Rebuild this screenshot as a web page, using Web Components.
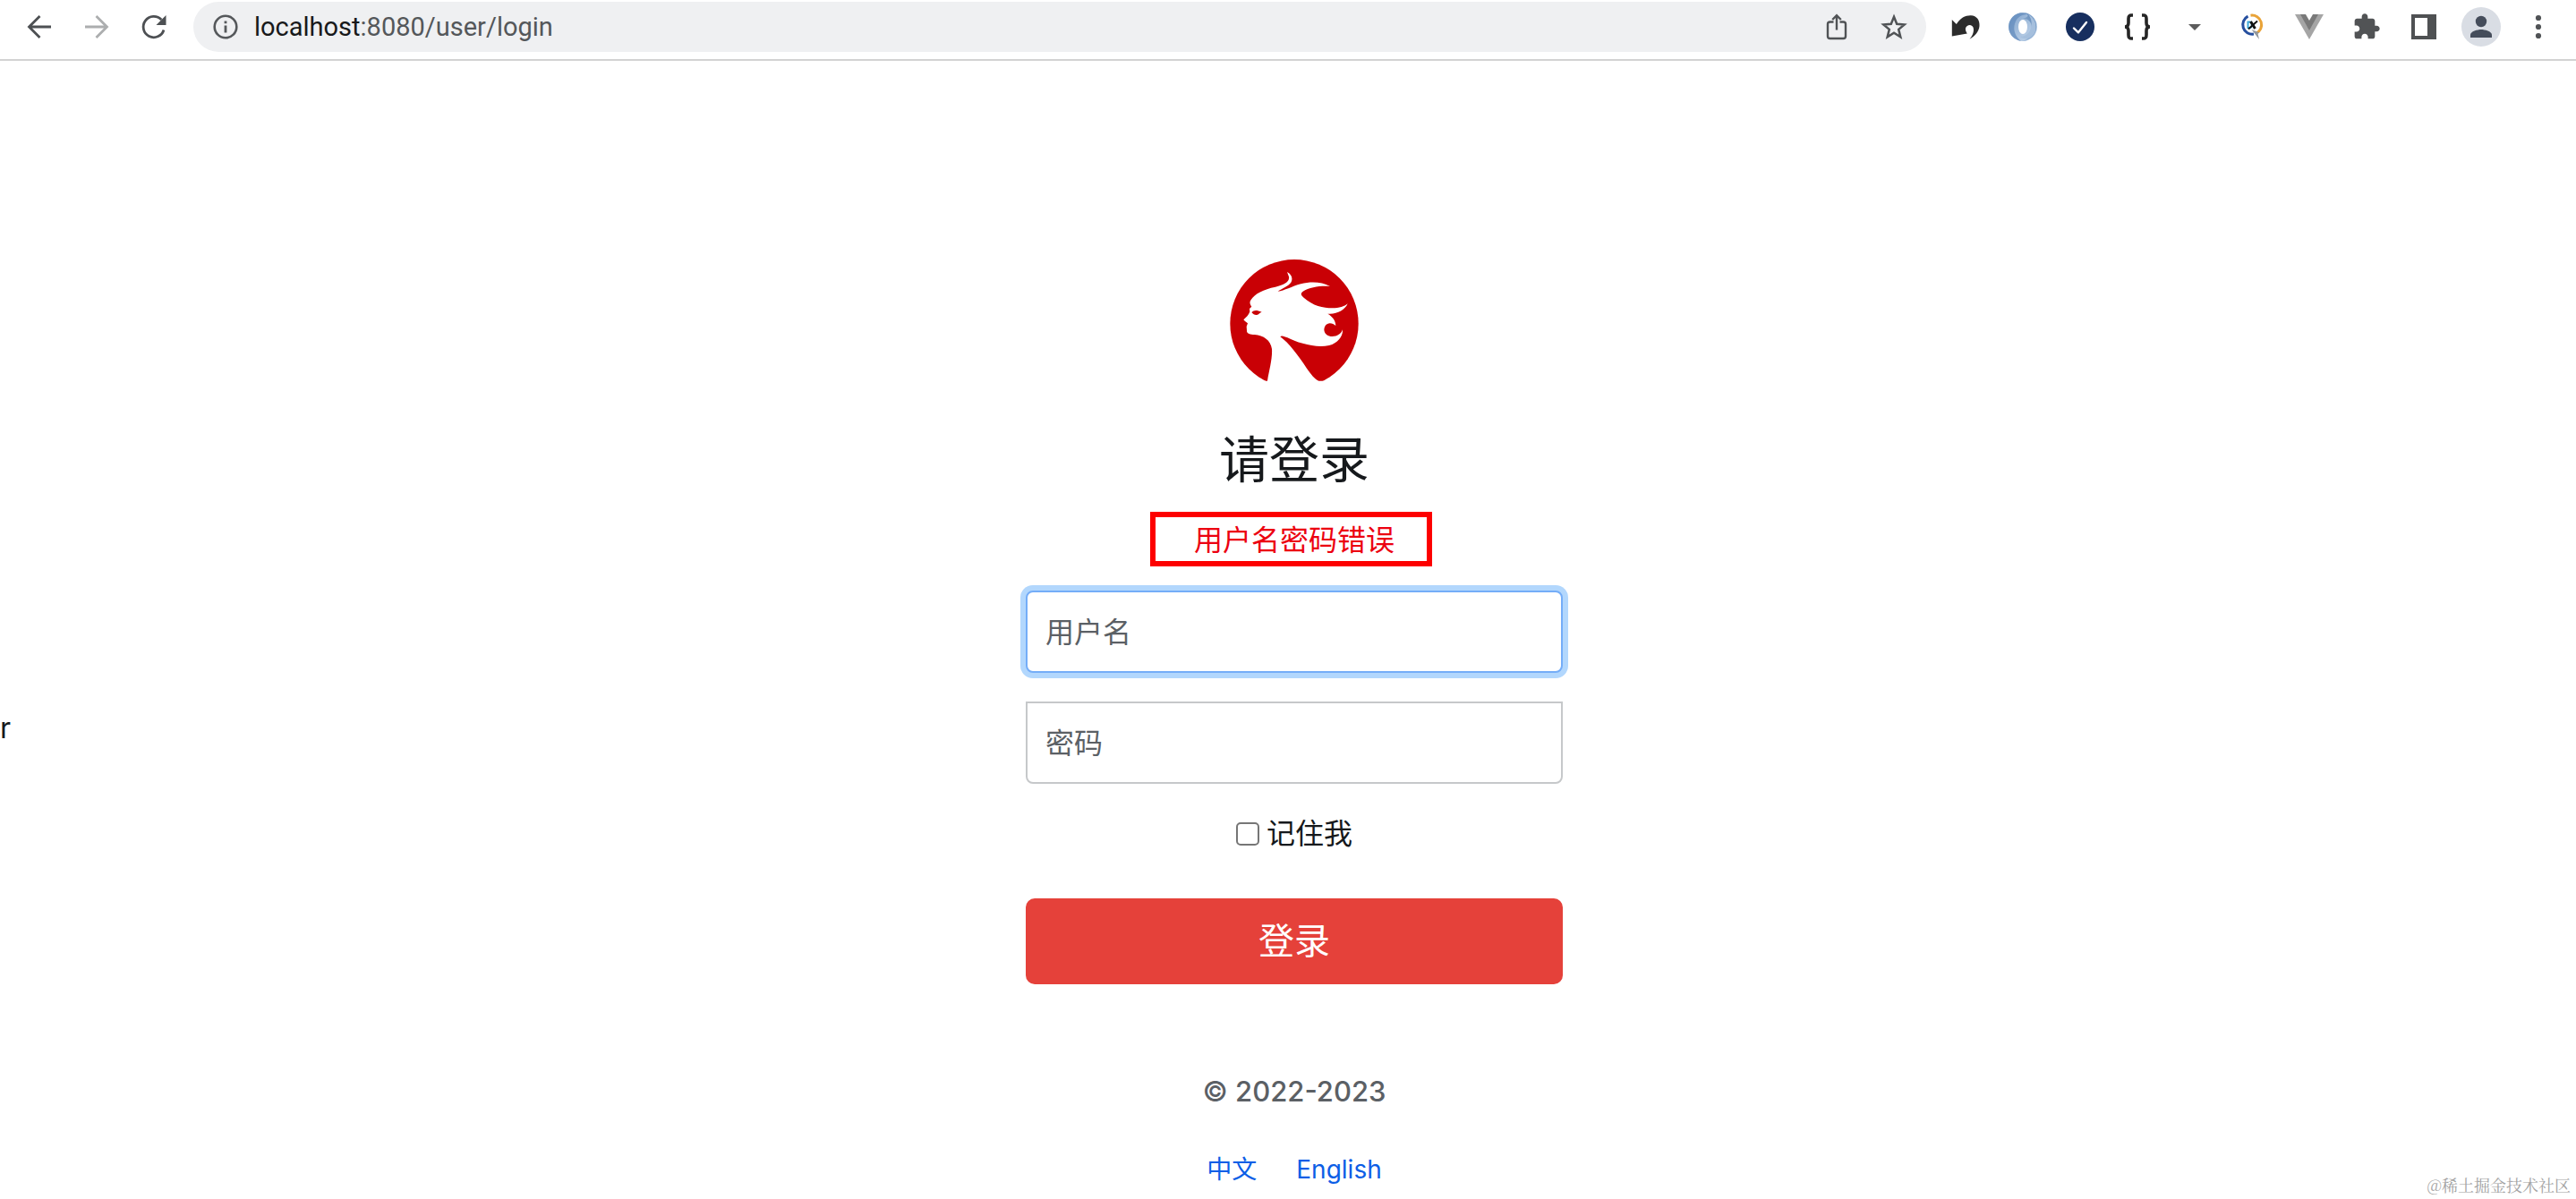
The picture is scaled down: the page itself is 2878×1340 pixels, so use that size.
<!DOCTYPE html>
<html lang="zh">
<head>
<meta charset="utf-8">
<title>Login</title>
<style>
  body { margin: 0; background: #fff; color: #16191c; font-family: Inter, "Noto Sans CJK SC", sans-serif; font-size: 32px; line-height: 48px; }
</style>
</head>
<body>
<login-app></login-app>
<script>
const define = (name, html) => {
  const t = document.createElement('template');
  t.innerHTML = html;
  customElements.define(name, class extends HTMLElement {
    constructor() {
      super();
      this.attachShadow({ mode: 'open' }).append(t.content.cloneNode(true));
    }
  });
};

customElements.define('tool-button', class extends HTMLElement {
  connectedCallback() {
    if (this.shadowRoot) return;
    this.attachShadow({ mode: 'open' }).innerHTML = `
      <style>
        :host { display: block; flex: none; }
        button { display: grid; place-items: center; width: 64px; height: 56px; padding: 0; border: 0; background: none; }
      </style>
      <button type="button" aria-label="${this.getAttribute('label')}"><slot></slot></button>`;
  }
});

customElements.define('text-field', class extends HTMLElement {
  connectedCallback() {
    if (this.shadowRoot) return;
    this.attachShadow({ mode: 'open' }).innerHTML = `
      <style>
        :host { display: block; }
        input { display: block; box-sizing: border-box; width: 100%; height: 92px; padding: 0 20px; border: 2px solid #c6c8ca; border-radius: 0 0 8px 8px; background: #fff; font: inherit; color: inherit; outline: none; }
        input::placeholder { color: #5b6065; opacity: 1; }
        :host([active]) input { border-color: #74adf8; border-radius: 8px; box-shadow: 0 0 0 6px #b2d7fd; }
      </style>
      <input type="${this.getAttribute('type')}" placeholder="${this.getAttribute('label')}" aria-label="${this.getAttribute('label')}">`;
  }
});

define('address-bar', `
  <style>
    :host { display: flex; flex: 1; align-items: center; height: 56px; padding: 0 4px; border-radius: 28px; background: #eff0f2; font-family: Roboto, sans-serif; font-size: 29px; line-height: 36px; }
    .site { display: grid; place-items: center; width: 64px; }
    .url { flex: 1; color: #54575a; }
    b { font-weight: 400; color: #18191b; }
    svg { display: block; }
  </style>
  <span class="site"><svg width="28" height="28" viewBox="0 0 28 28"><circle cx="14" cy="14" r="12.3" fill="none" stroke="#55585b" stroke-width="2.6"/><path d="M12.6 12.5h2.8v8h-2.8zM12.6 7.5h2.8v2.8h-2.8z" fill="#55585b"/></svg></span>
  <span class="url"><b>localhost</b>:8080/user/login</span>
  <tool-button label="Share"><svg width="28" height="32" viewBox="0 0 28 32" fill="none" stroke="#505356" stroke-width="2.4"><path d="M10.500 10.500H6.500a2.500 2.500 0 0 0-2.500 2.500v13.500a2.500 2.500 0 0 0 2.500 2.500h15a2.500 2.500 0 0 0 2.500-2.500V13a2.500 2.500 0 0 0-2.500-2.500h-4M14 19.500V4M9.200 8L14 3.200 18.800 8"/></svg></tool-button>
  <tool-button label="Bookmark"><svg width="32" height="32" viewBox="0 0 32 32" fill="none" stroke="#505356" stroke-width="2.500"><path d="M16 4.800l3.200 7.900 8.500.7-6.500 5.500 2.100 8.300-7.300-4.500-7.300 4.500 2.100-8.300-6.500-5.500 8.500-.7z"/></svg></tool-button>
`);

define('browser-bar', `
  <style>
    :host { display: flex; align-items: center; gap: 12px; padding: 2px 10px 8px 12px; border-bottom: 2px solid #d2d2d2; background: #fff; }
    nav { display: flex; }
    svg { display: block; }
  </style>
  <nav>
    <tool-button label="Back"><svg width="32" height="32" viewBox="0 0 32 32" fill="none" stroke="#4d5053" stroke-width="2.800"><path d="M29 16H5M16.500 4L4.500 16l12 12"/></svg></tool-button>
    <tool-button label="Forward"><svg width="32" height="32" viewBox="0 0 32 32" fill="none" stroke="#acaeaf" stroke-width="2.800"><path d="M3 16h24M15.500 4l12 12-12 12"/></svg></tool-button>
    <tool-button label="Reload"><svg width="32" height="32" viewBox="0 0 32 32"><path d="M27 19.500A11.700 11.700 0 1 1 24.300 8" fill="none" stroke="#4d5053" stroke-width="2.800"/><path d="M29.500 3v11h-11z" fill="#4d5053"/></svg></tool-button>
  </nav>
  <address-bar></address-bar>
  <nav>
    <tool-button label="Undo"><svg width="32" height="32" viewBox="0 0 32 32"><path d="M.8 8l5 5C10 6 16 3 22 3.200c6.500.4 10 5.300 9.500 11.800-.5 6-4.500 11-11 14.800 4-4.800 5.300-9.800 4-13.300-1.300-2.800-4.500-3.300-7-1.200-2 1.700-2.200 4.200.3 8.200L.8 26.500z" fill="#2c2c2c"/></svg></tool-button>
    <tool-button label="Swirl"><svg width="32" height="32" viewBox="0 0 32 32"><defs><linearGradient id="a" x1="0" y1="0" x2="1" y2="1"><stop offset="0" stop-color="#7fa3cc"/><stop offset="1" stop-color="#c9daee"/></linearGradient><linearGradient id="b" x1="1" y1="0" x2="0" y2="1"><stop offset="0" stop-color="#5580b2"/><stop offset="1" stop-color="#a9c3e0"/></linearGradient></defs><circle cx="16" cy="16" r="16" fill="url(#a)"/><path d="M18 .2A16 16 0 0 1 14 31.900c7-1 12-6 12-14C26 10 22 7 16 7c6-2 8-4 2-6.800z" fill="url(#b)"/><path d="M3 7A16 16 0 0 0 14 31.900C6 26 4 16 9 8 12 4 16 2 22 2 14-1 7 1 3 7z" fill="#5f89ba" opacity=".7"/><path d="M22 2c4 5 5 12 2 18-2 4-6 7-11 7 6 5 15 1 17-6 2-8-1-15-8-19z" fill="#a5bfdd"/><ellipse cx="16" cy="16" rx="5" ry="8" fill="#fff"/></svg></tool-button>
    <tool-button label="Check"><svg width="32" height="32" viewBox="0 0 32 32"><circle cx="16" cy="16" r="16" fill="#172f5f"/><path d="M9 17.500l5 4.800L23 11" fill="none" stroke="#fff" stroke-width="2.400" stroke-linecap="round" stroke-linejoin="round"/></svg></tool-button>
    <tool-button label="JSON"><svg width="32" height="32" viewBox="0 0 32 32" fill="none" stroke="#252525" stroke-width="3.600"><path d="M11 3H9.500C6.500 3 6 4.500 6 7v4.500C6 14 5 16 2 16c3 0 4 2 4 4.500V25c0 2.500.5 4 3.500 4H11M21 3h1.500C25.500 3 26 4.500 26 7v4.500c0 2.500 1 4.500 4 4.500-3 0-4 2-4 4.500V25c0 2.500-.5 4-3.500 4H21"/></svg></tool-button>
    <tool-button label="More tools"><svg width="32" height="32" viewBox="0 0 32 32"><path d="M9 13h14l-7 7z" fill="#5c5c5c"/></svg></tool-button>
    <tool-button label="DX"><svg width="32" height="32" viewBox="0 0 32 32" fill="none"><path d="M14.500 3.200A10.600 10.600 0 0 1 20.500 23.300" stroke="#e9a338" stroke-width="3"/><path d="M11.500 4.200A10.600 10.600 0 0 0 18 24.100" stroke="#264f9f" stroke-width="3"/><path d="M11.500 10.500h2c3 0 3 6.500 0 6.500h-2z" stroke="#3ba7da" stroke-width="2"/><path d="M14.500 10l5 8" stroke="#111" stroke-width="3"/><path d="M22 9.500L12 18.500" stroke="#111" stroke-width="2"/><path d="M15.500 19l8.500 11-1.500-6.500 2-1z" fill="#92989e"/></svg></tool-button>
    <tool-button label="Vue"><svg width="32" height="32" viewBox="0 0 32 32"><path d="M0 2h32L16 30z" fill="#a5a5a5"/><path d="M6 2h20L16 20z" fill="#797979"/><path d="M12 2h8l-4 7z" fill="#fff"/></svg></tool-button>
    <tool-button label="Extensions"><svg width="32" height="32" viewBox="0 0 24 24"><path d="M20.500 11H19V7c0-1.100-.9-2-2-2h-4V3.500C13 2.120 11.880 1 10.500 1S8 2.120 8 3.500V5H4c-1.100 0-1.990.9-1.990 2v3.800H3.500c1.490 0 2.700 1.210 2.700 2.700s-1.210 2.700-2.700 2.700H2V20c0 1.100.9 2 2 2h3.800v-1.500c0-1.490 1.210-2.700 2.700-2.700 1.490 0 2.700 1.210 2.700 2.700V22H17c1.100 0 2-.9 2-2v-4h1.500c1.380 0 2.500-1.120 2.500-2.500S21.880 11 20.500 11z" fill="#515355"/></svg></tool-button>
    <tool-button label="Side panel"><svg width="32" height="32" viewBox="0 0 32 32"><path d="M2 2h28v28H2zM6 6v20h14V6z" fill="#4f5153" fill-rule="evenodd"/></svg></tool-button>
    <tool-button label="Profile"><svg width="44" height="44" viewBox="0 0 44 44"><circle cx="22" cy="22" r="22" fill="#d9dde4"/><circle cx="22" cy="16" r="6.200" fill="#454d5b"/><path d="M10 34v-3c0-4 8-6 12-6s12 2 12 6v3z" fill="#454d5b"/></svg></tool-button>
    <tool-button label="Menu"><svg width="32" height="32" viewBox="0 0 32 32" fill="#505356"><circle cx="16" cy="6" r="3.100"/><circle cx="16" cy="16" r="3.100"/><circle cx="16" cy="26" r="3.100"/></svg></tool-button>
  </nav>
`);

define('brand-logo', `
  <style>:host { display: block; } svg { display: block; }</style>
  <svg width="144" height="144" viewBox="42 24 432 432" role="img" aria-label="Logo">
    <circle cx="258" cy="245" r="215" fill="#c90005"/>
    <path fill="#fff" d="M168 437C174 400 185 365 183 330 179 300 155 285 125 282 110 282 98 279 99 268L98 255 102 244 93 237 88 232C96 225 106 215 109 205L108 195 115 188C108 180 108 170 113 165 125 145 155 130 195 122 225 115 243 105 240 88L234 72C250 80 254 95 247 107 240 118 215 128 203 137 225 135 250 120 280 112 315 103 350 105 378 120 350 117 310 122 287 137 278 143 280 151 290 158 320 185 355 193 385 193 410 193 425 188 437 178 428 200 400 215 370 212 385 220 397 235 397 252 388 244 372 238 362 252 352 268 362 285 380 288 400 290 415 280 420 265 422 285 405 310 375 318 330 328 270 310 235 292 225 288 215 283 211 289 240 310 270 350 300 395 315 415 325 430 340 437H356V470H150V437Z"/>
    <path d="M115 207c8-8 17-8 34-1-8 2-9 8-17 10-6 1-12-3-17-9z" fill="#c90005"/>
  </svg>
`);

define('form-error', `
  <style>
    :host { display: block; position: relative; color: #ec0010; }
    .mark { position: absolute; inset: -8px -42px -5px -49px; border: 6px solid #fd0000; }
  </style>
  <slot></slot><span class="mark"></span>
`);

define('login-form', `
  <style>
    :host { display: block; box-sizing: border-box; width: 600px; max-width: 100%; margin: 0 auto; padding-bottom: 12px; }
    form { display: flex; flex-direction: column; align-items: center; gap: 32px; }
    header { display: flex; flex-direction: column; align-items: center; gap: 48px; }
    h1 { margin: 0; font-size: 56px; line-height: 68px; font-weight: 400; }
    text-field, button { width: 100%; }
    label { display: flex; align-items: center; gap: 8px; }
    input { appearance: none; box-sizing: border-box; width: 26px; height: 26px; margin: 0; border: 2px solid #767676; border-radius: 5px; background: #fff; }
    button { height: 96px; margin-top: 16px; padding: 0; border: 0; border-radius: 10px; background: #e5413a; color: #fff; font: inherit; font-size: 40px; }
    footer { display: flex; flex-direction: column; align-items: center; gap: 42px; margin-top: 64px; }
    p { margin: 0; color: #5b6065; font-size: 31px; font-weight: 500; }
    nav { display: flex; gap: 44px; font-size: 28px; line-height: 42px; }
    a { color: #0c5ee6; text-decoration: none; }
  </style>
  <form>
    <header><brand-logo></brand-logo><h1>请登录</h1></header>
    <form-error>用户名密码错误</form-error>
    <text-field type="text" label="用户名" active></text-field>
    <text-field type="password" label="密码"></text-field>
    <label><input type="checkbox">记住我</label>
    <button type="submit">登录</button>
    <footer><p>© 2022-2023</p><nav><a href="#zh">中文</a><a href="#en">English</a></nav></footer>
  </form>
`);

define('login-app', `
  <style>
    :host { display: flex; flex-direction: column; min-height: 100vh; position: relative; }
    main { display: flex; flex: 1; align-items: center; gap: 2px; padding-top: 220px; }
    small { position: absolute; right: 6px; bottom: 4px; color: #a3a3a3; font: 18px/24px "Noto Serif CJK SC", "Liberation Serif", "Noto Sans CJK SC", serif; }
  </style>
  <browser-bar></browser-bar>
  <main><span>r</span><login-form></login-form></main>
  <small>@稀土掘金技术社区</small>
`);
</script>
</body>
</html>
